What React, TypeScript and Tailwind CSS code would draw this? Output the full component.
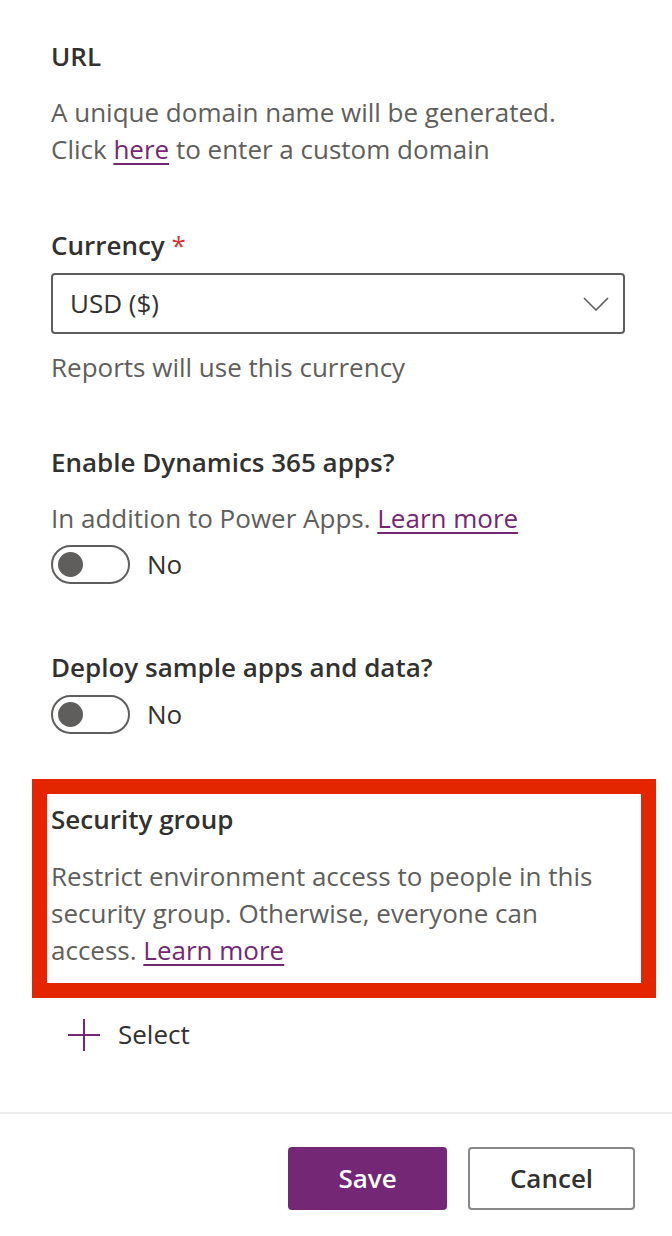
import React from 'react';

const font = { fontFamily: '"Open Sans", "Noto Sans", Arial, sans-serif' };

const Toggle: React.FC<{ label: string }> = ({ label }) => (
  <div className="flex items-center gap-[17px]">
    <div className="w-[79px] h-[39px] rounded-full border-2 border-[#605e5c] flex items-center pl-[5px]">
      <div className="w-[25px] h-[25px] rounded-full bg-[#605e5c]" />
    </div>
    <span className="text-[#323130]">{label}</span>
  </div>
);

const Link: React.FC<{ children: React.ReactNode }> = ({ children }) => (
  <a href="#" className="text-[#742774] underline underline-offset-[4px] decoration-2">
    {children}
  </a>
);

export default function App() {
  return (
    <div style={font} className="w-[672px] h-[1236px] bg-white text-[26px] leading-[37px] flex flex-col">
      <div className="pl-[51px] pr-[47px] pt-[38px] flex flex-col">
        <div className="font-semibold text-[#323130]">URL</div>
        <div className="mt-[19px] text-[#605e5c]">
          A unique domain name will be generated.
          <br />
          Click <Link>here</Link> to enter a custom domain
        </div>

        <div className="mt-[59px] font-semibold text-[#323130]">
          Currency <span className="text-[#d13438] font-normal">*</span>
        </div>
        <div className="mt-[9px] h-[61px] border-2 border-[#605e5c] rounded-[4px] flex items-center justify-between pl-[17px] pr-[14px] text-[#323130]">
          <span>USD ($)</span>
          <svg width="26" height="14" viewBox="0 0 26 14" fill="none">
            <path d="M1 1 L13 13 L25 1" stroke="#605e5c" strokeWidth="1.6" />
          </svg>
        </div>
        <div className="mt-[15px] text-[#605e5c]">Reports will use this currency</div>

        <div className="mt-[58px] font-semibold text-[#323130]">Enable Dynamics 365 apps?</div>
        <div className="mt-[19px] text-[#605e5c]">
          In addition to Power Apps. <Link>Learn more</Link>
        </div>
        <div className="mt-[8px]">
          <Toggle label="No" />
        </div>

        <div className="mt-[65px] font-semibold text-[#323130]">Deploy sample apps and data?</div>
        <div className="mt-[9px]">
          <Toggle label="No" />
        </div>

        <div className="mt-[45px] -ml-[19px] w-[624px] border-[15px] border-[#e32600] pl-[4px] pt-[7px] pb-[14px]">
          <div className="font-semibold text-[#323130]">Security group</div>
          <div className="mt-[20px] text-[#605e5c] w-[566px]">
            Restrict environment access to people in this security group. Otherwise, everyone can access.{' '}
            <Link>Learn more</Link>
          </div>
        </div>

        <button className="mt-[18px] ml-[16px] flex items-center gap-[17px] text-[#323130] self-start">
          <svg width="34" height="34" viewBox="0 0 34 34" fill="none">
            <path d="M17 1 V33 M1 17 H33" stroke="#742774" strokeWidth="2" />
          </svg>
          <span>Select</span>
        </button>
      </div>

      <div className="mt-auto border-t-2 border-[#edebe9] pt-[33px] pb-[26px] pr-[37px] flex justify-end gap-[21px]">
        <button className="w-[159px] h-[63px] rounded-[4px] bg-[#742774] text-white font-semibold">Save</button>
        <button className="w-[167px] h-[63px] rounded-[4px] border-2 border-[#8a8886] text-[#323130] font-semibold">
          Cancel
        </button>
      </div>
    </div>
  );
}
